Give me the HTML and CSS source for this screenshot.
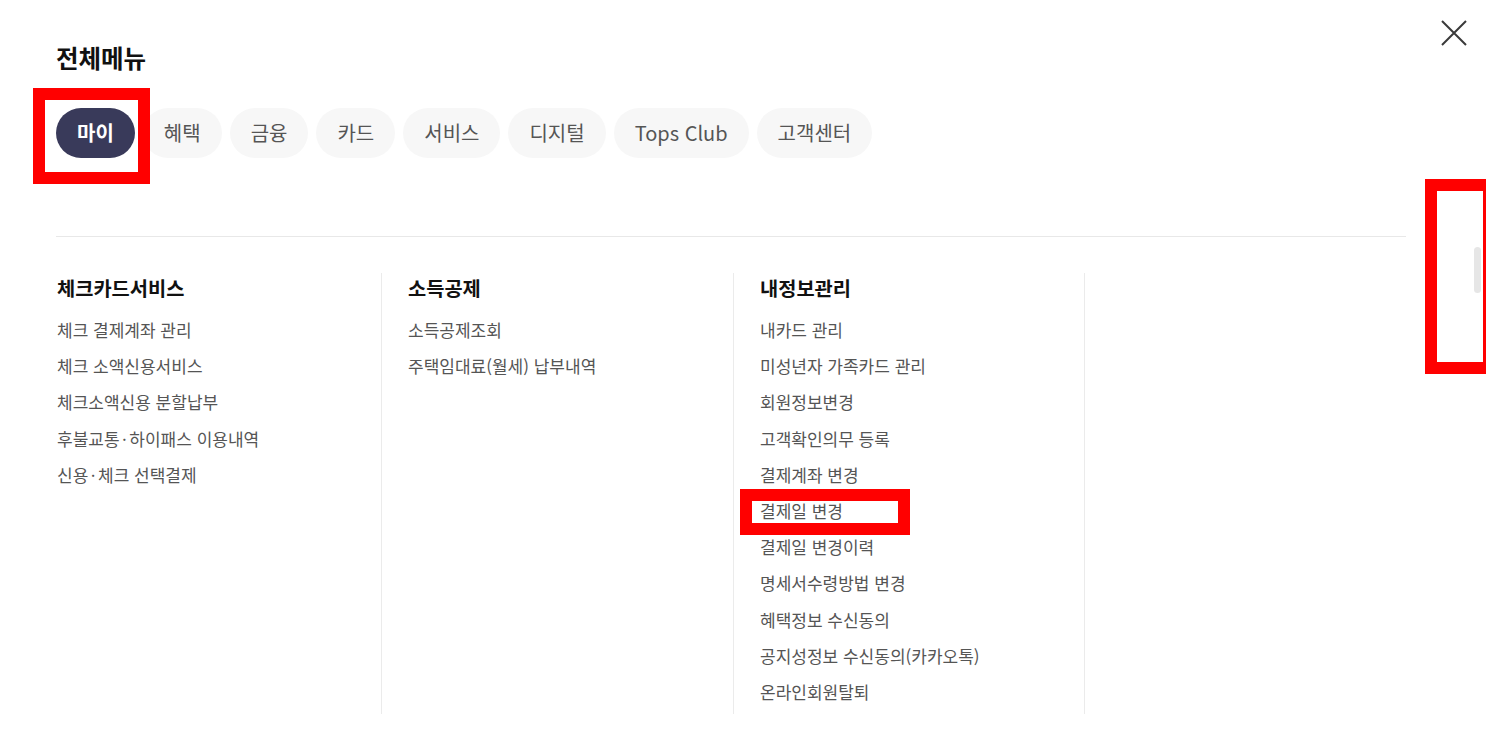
FILE: index.html
```html
<!DOCTYPE html>
<html lang="ko">
<head>
<meta charset="utf-8">
<title>전체메뉴</title>
<link rel="stylesheet" href="styles.css">
</head>
<body>
<div class="modal">
  <h1 class="title">전체메뉴</h1>
  <button class="close" aria-label="닫기">
    <svg width="26" height="26" viewBox="0 0 26 26"><path d="M1 1L25 25M25 1L1 25" stroke="#3a3a3a" stroke-width="2" fill="none"/></svg>
  </button>
  <nav class="tabs">
    <span class="tab active">마이</span>
    <span class="tab">혜택</span>
    <span class="tab">금융</span>
    <span class="tab">카드</span>
    <span class="tab">서비스</span>
    <span class="tab">디지털</span>
    <span class="tab">Tops Club</span>
    <span class="tab">고객센터</span>
  </nav>
  <div class="divider"></div>
  <div class="columns">
    <section class="col">
      <h2 class="col-title">체크카드서비스</h2>
      <ul class="items">
        <li>체크 결제계좌 관리</li>
        <li>체크 소액신용서비스</li>
        <li>체크소액신용 분할납부</li>
        <li>후불교통<span class="dot">·</span>하이패스 이용내역</li>
        <li>신용<span class="dot">·</span>체크 선택결제</li>
      </ul>
    </section>
    <section class="col">
      <h2 class="col-title">소득공제</h2>
      <ul class="items">
        <li>소득공제조회</li>
        <li>주택임대료(월세) 납부내역</li>
      </ul>
    </section>
    <section class="col">
      <h2 class="col-title">내정보관리</h2>
      <ul class="items">
        <li>내카드 관리</li>
        <li>미성년자 가족카드 관리</li>
        <li>회원정보변경</li>
        <li>고객확인의무 등록</li>
        <li>결제계좌 변경</li>
        <li>결제일 변경</li>
        <li>결제일 변경이력</li>
        <li>명세서수령방법 변경</li>
        <li>혜택정보 수신동의</li>
        <li>공지성정보 수신동의(카카오톡)</li>
        <li>온라인회원탈퇴</li>
      </ul>
    </section>
    <section class="col empty"></section>
  </div>
  <div class="scroll-thumb"></div>
</div>
<div class="mark mark-tab"></div>
<div class="mark mark-scroll"></div>
<div class="mark mark-item"></div>
</body>
</html>
```

FILE: styles.css
```css
* { box-sizing: border-box; }
html, body {
  margin: 0;
  padding: 0;
  width: 1486px;
  height: 737px;
  overflow: hidden;
  background: #fff;
  font-family: "Noto Sans CJK KR", "Noto Sans", sans-serif;
}
.modal {
  position: relative;
  width: 1486px;
  height: 737px;
  padding: 41px 0 0 56px;
}
.title {
  margin: 0;
  font-size: 24.5px;
  line-height: 34px;
  font-weight: 700;
  color: #111;
}
.close {
  position: absolute;
  top: 20px;
  left: 1440px;
  width: 28px;
  height: 28px;
  padding: 0;
  border: 0;
  background: none;
}
.tabs {
  display: flex;
  gap: 8px;
  margin-top: 33px;
}
.tab {
  height: 50px;
  line-height: 50px;
  padding: 0 21px;
  border-radius: 25px;
  background: #f7f7f7;
  color: #555;
  font-size: 20px;
  white-space: nowrap;
}
.tab.active {
  background: #393a5a;
  color: #fff;
  font-weight: 700;
}
.divider {
  width: 1350px;
  height: 1px;
  background: #e8e8e8;
  margin-top: 78px;
}
.columns {
  display: grid;
  grid-template-columns: 325px 352px 351px 322px;
  width: 1350px;
  margin-top: 36px;
}
.col {
  padding: 2px 0 4px 26px;
  border-left: 1px solid #ebebeb;
}
.col:first-child {
  border-left: 0;
  padding-left: 1px;
}
.col-title {
  margin: 0 0 11px;
  font-size: 19.8px;
  line-height: 26px;
  font-weight: 700;
  color: #111;
}
.items {
  list-style: none;
  margin: 0;
  padding: 0;
}
.items li {
  font-size: 17px;
  line-height: 36.2px;
  height: 36.2px;
  color: #555;
  white-space: nowrap;
}
.dot { margin: 0 2.5px; }
.scroll-thumb {
  position: absolute;
  left: 1474px;
  top: 247px;
  width: 7px;
  height: 46px;
  border-radius: 4px;
  background: #e6e6e6;
}
.mark {
  position: absolute;
  border: 12px solid #ff0000;
}
.mark-tab { left: 33px; top: 88px; width: 117px; height: 96px; }
.mark-scroll { left: 1425px; top: 179px; width: 70px; height: 195px; }
.mark-item { left: 740px; top: 489px; width: 170px; height: 46px; }
```
